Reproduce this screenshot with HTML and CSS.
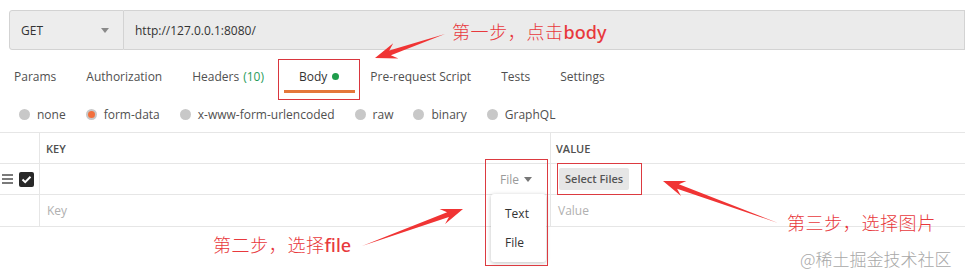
FILE: index.html
```html
<!DOCTYPE html>
<html lang="zh">
<head>
  <meta charset="UTF-8">
  <title>Postman form-data</title>
  <link rel="stylesheet" href="styles.css">
</head>
<body>
  <!-- Request line -->
  <div class="url-bar">
    <div class="method">GET <span class="caret"></span></div>
    <div class="url">http://127.0.0.1:8080/</div>
  </div>

  <!-- Request tabs -->
  <div class="tabs">
    <div class="tab">Params</div>
    <div class="tab">Authorization</div>
    <div class="tab">Headers <span class="count">(10)</span></div>
    <div class="tab active">Body <span class="dot"></span><span class="mark"></span></div>
    <div class="tab">Pre-request Script</div>
    <div class="tab">Tests</div>
    <div class="tab">Settings</div>
  </div>

  <!-- Body types -->
  <div class="body-types">
    <div class="radio"><span class="circle"></span>none</div>
    <div class="radio"><span class="circle on"></span>form-data</div>
    <div class="radio"><span class="circle"></span>x-www-form-urlencoded</div>
    <div class="radio"><span class="circle"></span>raw</div>
    <div class="radio"><span class="circle"></span>binary</div>
    <div class="radio"><span class="circle"></span>GraphQL</div>
  </div>

  <!-- Key / value table -->
  <div class="kv-table">
    <div class="row head">
      <div class="cell handle"></div>
      <div class="cell key">KEY</div>
      <div class="cell value">VALUE</div>
    </div>
    <div class="row">
      <div class="cell handle">
        <span class="drag"><i></i><i></i><i></i></span>
        <span class="check">
          <svg width="11" height="9" viewBox="0 0 11 9"><path d="M1.5 4.5 L4.2 7.2 L9.5 1.8" fill="none" stroke="#fff" stroke-width="2"/></svg>
        </span>
      </div>
      <div class="cell key type-cell"><span class="type">File</span><span class="type-caret"></span></div>
      <div class="cell value"><span class="select-files">Select Files</span></div>
    </div>
    <div class="row last">
      <div class="cell handle"></div>
      <div class="cell key placeholder">Key</div>
      <div class="cell value placeholder">Value</div>
    </div>
  </div>

  <!-- Type menu -->
  <div class="type-menu">
    <div class="menu-item">Text</div>
    <div class="menu-item">File</div>
  </div>

  <!-- Annotations -->
  <div class="box box-type"></div>
  <div class="box box-files"></div>

  <div class="note note-1">第一步，点击<span class="latin">body</span></div>
  <div class="note note-2">第二步，选择<span class="latin">file</span></div>
  <div class="note note-3">第三步，选择图片</div>

  <svg class="arrows" width="965" height="275" viewBox="0 0 965 275">
    <polygon points="445,34 389.3,50.5 393.2,43.3 375,58 398.4,58.5 390.9,55.2"/>
    <polygon points="362,246 448.9,216.9 445.1,224.1 463,209 439.6,209.1 447.1,212.2"/>
    <polygon points="778,223 678.9,184.2 686.4,181 663,181 681,196 677.1,188.8"/>
  </svg>

  <div class="watermark">@稀土掘金技术社区</div>
</body>
</html>
```

FILE: styles.css
```css
/* General Reset */
* {
  margin: 0;
  padding: 0;
  box-sizing: border-box;
}
body {
  font-family: "Open Sans", "Noto Sans", sans-serif;
  font-size: 12px;
  color: #505050;
  background-color: #fff;
  width: 965px;
  height: 275px;
  overflow: hidden;
  position: relative;
}

/* Request line */
.url-bar {
  display: flex;
  height: 40px;
  margin: 10px 0 0 9px;
}
.method {
  width: 115px;
  display: flex;
  align-items: center;
  justify-content: space-between;
  padding: 0 14px 0 11px;
  background-color: #ededed;
  border: 1px solid #d3d3d3;
  border-radius: 3px 0 0 3px;
  color: #333;
}
.caret {
  width: 0;
  height: 0;
  border-left: 4px solid transparent;
  border-right: 4px solid transparent;
  border-top: 5px solid #8a8a8a;
}
.url {
  flex: 1;
  display: flex;
  align-items: center;
  padding-left: 11px;
  background-color: #ebebeb;
  border: 1px solid #d3d3d3;
  border-left: none;
  color: #333;
}

/* Tabs */
.tabs {
  display: flex;
  height: 30px;
  margin-top: 13px;
}
.tab {
  position: relative;
  height: 30px;
  padding: 0 15px;
  display: flex;
  align-items: center;
  border-bottom: 3px solid transparent;
  white-space: nowrap;
}
.tab:first-child {
  padding-left: 14px;
}
.tab .count {
  color: #2a9c5a;
  margin-left: 4px;
}
.tab.active {
  color: #333;
  border-bottom-color: #e4773a;
  margin-left: 5px;
  padding-right: 16px;
}
.dot {
  width: 7px;
  height: 7px;
  border-radius: 50%;
  background-color: #1f9d4c;
  margin-left: 5px;
}
.mark {
  position: absolute;
  left: -6px;
  right: -5px;
  top: -4px;
  bottom: -10px;
  border: 1px solid #d9363e;
}

/* Body types */
.body-types {
  display: flex;
  align-items: center;
  height: 28px;
  margin-top: 7px;
  padding-left: 19px;
}
.radio {
  display: flex;
  align-items: center;
  margin-right: 20px;
}
.circle {
  width: 11px;
  height: 11px;
  border-radius: 50%;
  background-color: #c8c8c8;
  margin-right: 7px;
  display: flex;
  align-items: center;
  justify-content: center;
}
.circle.on::after {
  content: "";
  width: 7px;
  height: 7px;
  border-radius: 50%;
  background-color: #f2703d;
}

/* Key / value table */
.kv-table {
  margin-top: 4px;
  border-top: 1px solid #e6e6e6;
}
.row {
  display: grid;
  grid-template-columns: 40px 511px 1fr;
  height: 31px;
  border-bottom: 1px solid #e6e6e6;
}
.row.last {
  height: 32px;
}
.cell {
  display: flex;
  align-items: center;
}
.handle,
.key {
  border-right: 1px solid #e6e6e6;
}
.head .cell {
  font-size: 11px;
  font-weight: 600;
  color: #505050;
}
.key {
  padding-left: 6px;
}
.value {
  padding-left: 5px;
}
.placeholder {
  color: #b0b0b0;
  padding-left: 7px;
}
.drag {
  display: flex;
  flex-direction: column;
  gap: 2px;
  margin-left: 2px;
}
.drag i {
  display: block;
  width: 11px;
  height: 2px;
  background-color: #7a7a7a;
}
.check {
  width: 15px;
  height: 15px;
  margin-left: 6px;
  border-radius: 2px;
  background-color: #282828;
  display: flex;
  align-items: center;
  justify-content: center;
}
.type-cell {
  justify-content: flex-end;
  padding-right: 18px;
  padding-top: 1px;
}
.type {
  color: #9a9a9a;
}
.type-caret {
  width: 0;
  height: 0;
  margin-left: 5px;
  border-left: 4px solid transparent;
  border-right: 4px solid transparent;
  border-top: 5px solid #777;
}
.select-files {
  margin-left: 3px;
  height: 22px;
  line-height: 22px;
  padding: 0 6px;
  background-color: #e6e6e6;
  border-radius: 2px;
  font-size: 11px;
  font-weight: 600;
  color: #555;
}

/* Type menu */
.type-menu {
  position: absolute;
  left: 491px;
  top: 194px;
  width: 55px;
  height: 68px;
  padding-top: 5px;
  background-color: #fff;
  border-radius: 3px;
  box-shadow: 0 1px 4px rgba(0, 0, 0, 0.25);
}
.menu-item {
  height: 29px;
  line-height: 29px;
  padding-left: 14px;
  color: #333;
}

/* Annotations */
.box {
  position: absolute;
  border: 1px solid #dc3a40;
}
.box-type {
  left: 485px;
  top: 159px;
  width: 63px;
  height: 107px;
}
.box-files {
  left: 557px;
  top: 163px;
  width: 85px;
  height: 32px;
}
.note {
  position: absolute;
  font-family: "Noto Sans CJK SC", sans-serif;
  font-weight: 300;
  font-size: 18px;
  letter-spacing: 0.6px;
  color: #e8393d;
  white-space: nowrap;
}
.note .latin {
  font-family: "Noto Sans", sans-serif;
  font-weight: 500;
  letter-spacing: 0;
}
.note-1 {
  left: 452px;
  top: 18px;
}
.note-2 {
  left: 213px;
  top: 231px;
}
.note-3 {
  left: 787px;
  top: 209px;
}
.arrows {
  position: absolute;
  left: 0;
  top: 0;
  fill: #f03434;
}
.watermark {
  position: absolute;
  left: 800px;
  top: 246px;
  font-family: "Noto Sans CJK SC", sans-serif;
  font-weight: 300;
  font-size: 17px;
  color: #a8a8a8;
  white-space: nowrap;
}
```
